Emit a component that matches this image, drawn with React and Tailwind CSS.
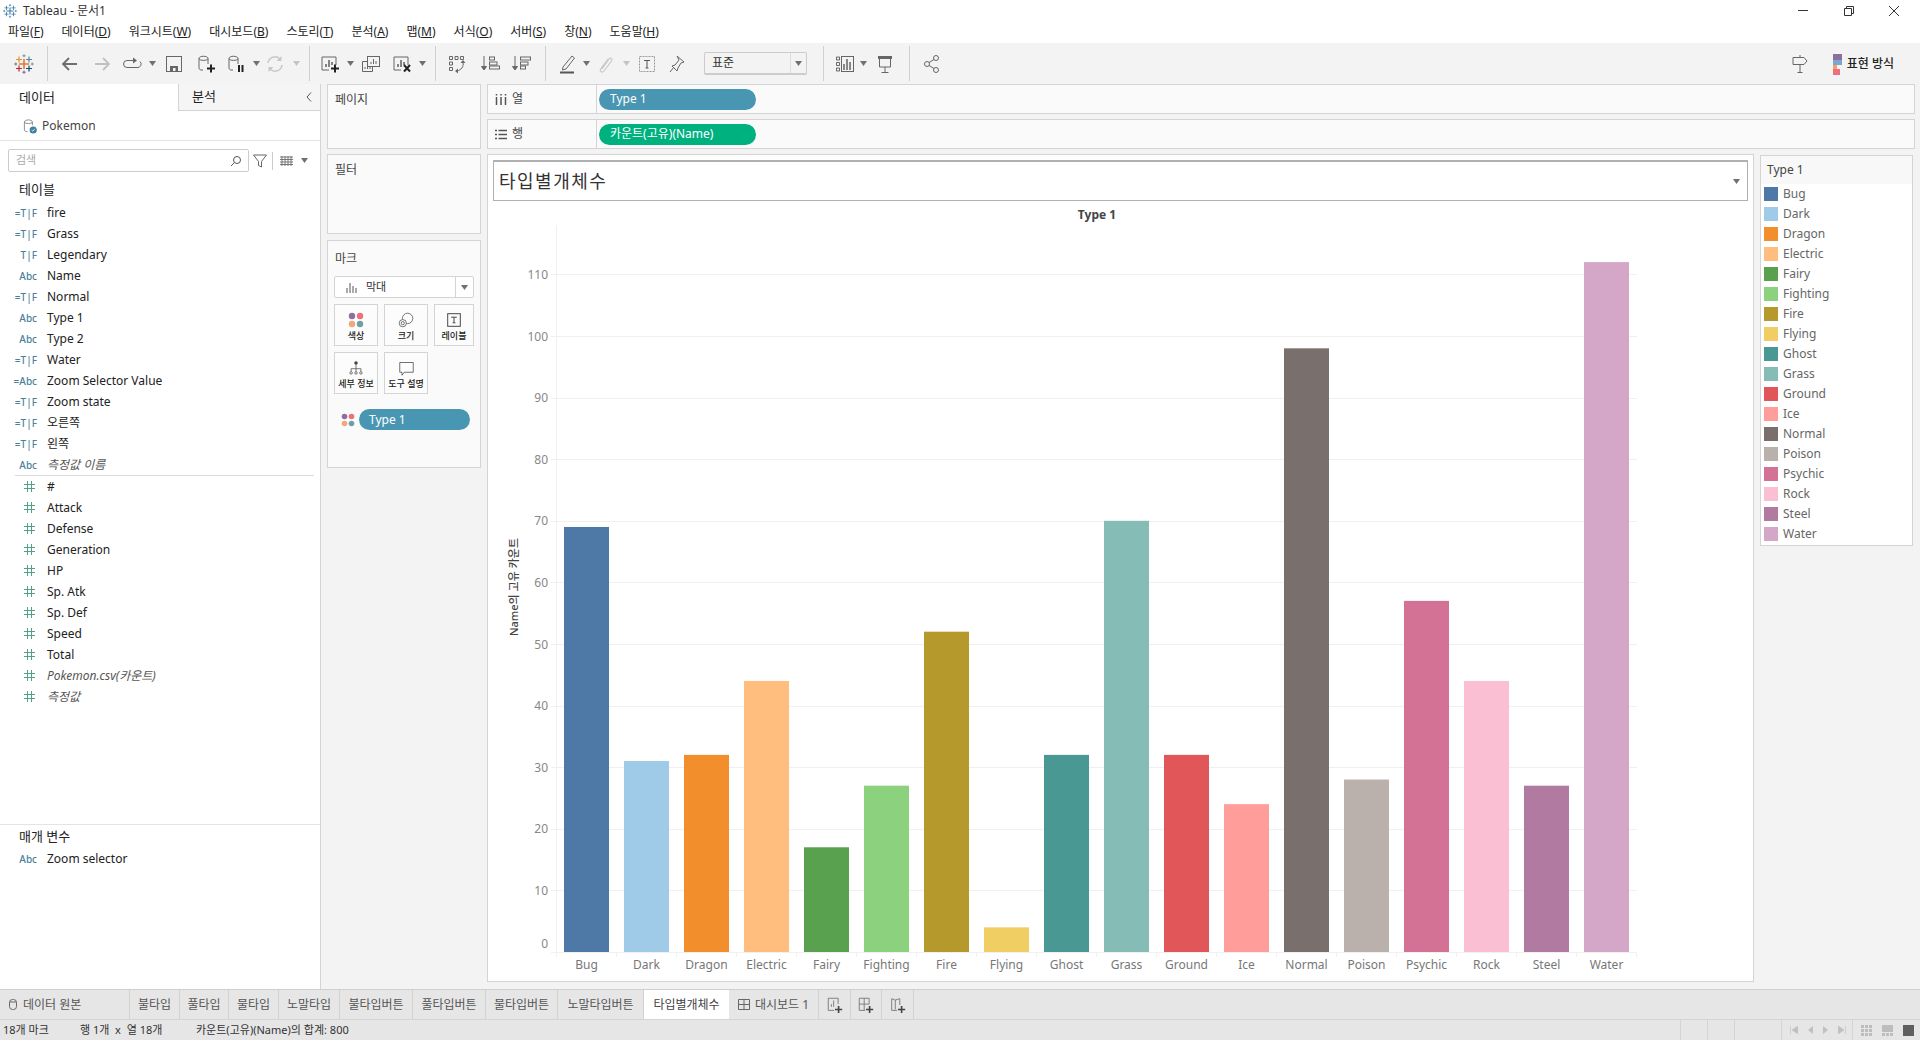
import React from 'react';

const dataFields = [
    ['=T|F', 'fire'], ['=T|F', 'Grass'], ['T|F', 'Legendary'], ['Abc', 'Name'], ['=T|F', 'Normal'],
    ['Abc', 'Type 1'], ['Abc', 'Type 2'], ['=T|F', 'Water'], ['=Abc', 'Zoom Selector Value'],
    ['=T|F', 'Zoom state'], ['=T|F', '오른쪽'], ['=T|F', '왼쪽'], ['Abc', '측정값 이름', true],
];
const measures = [
    ['#'], ['Attack'], ['Defense'], ['Generation'], ['HP'], ['Sp. Atk'], ['Sp. Def'], ['Speed'], ['Total'],
    ['Pokemon.csv(카운트)', true], ['측정값', true],
];
const types = [
    ['Bug', '#4e79a7', 69], ['Dark', '#a0cbe8', 31], ['Dragon', '#f28e2b', 32], ['Electric', '#ffbe7d', 44],
    ['Fairy', '#59a14f', 17], ['Fighting', '#8cd17d', 27], ['Fire', '#b6992d', 52], ['Flying', '#f1ce63', 4],
    ['Ghost', '#499894', 32], ['Grass', '#86bcb6', 70], ['Ground', '#e15759', 32], ['Ice', '#ff9d9a', 24],
    ['Normal', '#79706e', 98], ['Poison', '#bab0ac', 28], ['Psychic', '#d37295', 57], ['Rock', '#fabfd2', 44],
    ['Steel', '#b07aa1', 27], ['Water', '#d4a6c8', 112],
];
const menus = [
    ['파일', 'F'], ['데이터', 'D'], ['워크시트', 'W'], ['대시보드', 'B'], ['스토리', 'T'], ['분석', 'A'],
    ['맵', 'M'], ['서식', 'O'], ['서버', 'S'], ['창', 'N'], ['도움말', 'H'],
];
const sheetTabs = [
    ['불타입', 'w-[50px]'], ['풀타입', 'w-[49px]'], ['물타입', 'w-[50px]'], ['노말타입', 'w-[61px]'],
    ['불타입버튼', 'w-[73px]'], ['풀타입버튼', 'w-[73px]'], ['물타입버튼', 'w-[72px]'], ['노말타입버튼', 'w-[86px]'],
];

const Svg = ({ className = '', size = 20, children }) => (
    <svg width={size} height={size} viewBox="0 0 20 20" fill="none" className={`shrink-0 ${className}`}>{children}</svg>
);

const Cross = ({ x, y, r, c, w = 1 }) => (
    <path d={`M${x - r} ${y}H${x + r}M${x} ${y - r}V${y + r}`} stroke={c} strokeWidth={w} />
);

const Logo = ({ className, mono, size }) => (
    <Svg className={className} size={size}>
        <Cross x={10} y={10} r={5} c={mono ? '#3f7fa6' : '#e8762d'} w={1.6} />
        <Cross x={5} y={5.5} r={3} c={mono ? '#3f7fa6' : '#eb912b'} w={1.2} />
        <Cross x={15} y={5.5} r={3} c={mono ? '#3f7fa6' : '#5b879b'} w={1.2} />
        <Cross x={5} y={14.5} r={3} c={mono ? '#3f7fa6' : '#c72037'} w={1.2} />
        <Cross x={15} y={14.5} r={3} c={mono ? '#3f7fa6' : '#1f447e'} w={1.2} />
        <Cross x={10} y={1.8} r={1.6} c={mono ? '#3f7fa6' : '#7099a6'} />
        <Cross x={10} y={18.2} r={1.6} c={mono ? '#3f7fa6' : '#5b6591'} />
        <Cross x={1.8} y={10} r={1.6} c={mono ? '#3f7fa6' : '#59879b'} />
        <Cross x={18.2} y={10} r={1.6} c={mono ? '#3f7fa6' : '#7099a6'} />
    </Svg>
);

const Caret = ({ className = '', light }) => (
    <svg width="7" height="5" viewBox="0 0 7 5" className={`shrink-0 ${className}`}>
        <path d="M0 0h7L3.5 5z" fill={light ? '#c4c4c4' : '#707070'} />
    </svg>
);

const Divider = ({ className = '' }) => <div className={`w-px h-[35px] bg-[#d0d0d0] shrink-0 ${className}`} />;

const Cylinder = () => (
    <path d="M3 4.5C3 1.5 12 1.5 12 4.5V10M3 4.5C3 7 12 7 12 4.5M3 4.5V14c0 1 .8 1.8 2 2h2" stroke="#666" strokeWidth="1" />
);

const ChartBars = ({ stroke = '#666' }) => (
    <>
        <path d="M2 16V3h14v8M2 16h7" stroke={stroke} strokeWidth="1" />
        <path d="M6 13v-3M9 13V6M12 11V8" stroke={stroke} strokeWidth="1.6" />
    </>
);

const Plus = () => <path d="M15 10.5v8M11 14.5h8" stroke="#222" strokeWidth="2" />;

const Dots = ({ className = '', size = 16 }) => (
    <svg width={size} height={size} viewBox="0 0 16 16" className={`shrink-0 ${className}`}>
        <circle cx="4" cy="4" r="3.2" fill="#8f6f9f" />
        <circle cx="12" cy="4" r="3.2" fill="#f0707a" />
        <circle cx="4" cy="12" r="3.2" fill="#f2a77c" />
        <circle cx="12" cy="12" r="3.2" fill="#6f9fa8" />
    </svg>
);

const SortIcon = ({ flip }) => (
    <>
        <path d="M4 2v13M1.5 12.5L4 16l2.5-3.5z" stroke="#666" fill="#666" strokeWidth="1" />
        <rect x="9.5" y={flip ? 12 : 3} width="5" height="3" stroke="#666" />
        <rect x="9.5" y="8" width="7.5" height="3" stroke="#666" />
        <rect x="9.5" y={flip ? 3 : 12} width="10" height="3" stroke="#666" />
    </>
);

const Toolbar = () => (
    <div className="h-[41px] bg-[#f3f3f3] flex items-center pl-[14px] pr-[26px] shrink-0">
        <Logo />
        <Divider className="ml-[13px]" />
        <Svg className="ml-[12px]"><path d="M17 10H3M9 4l-6 6 6 6" stroke="#6e6e6e" strokeWidth="1.8" /></Svg>
        <Svg className="ml-[12px]"><path d="M3 10h14M11 4l6 6-6 6" stroke="#c0c0c0" strokeWidth="1.8" /></Svg>
        <Svg className="ml-[10px]">
            <path d="M11 6.5H5a3.5 3.5 0 0 0 0 7h10a3.5 3.5 0 0 0 3-6" stroke="#666" />
            <path d="M11 3.5l4 3-4 3z" fill="#666" />
        </Svg>
        <Caret className="ml-[7px]" />
        <Svg className="ml-[8px]">
            <rect x="2.5" y="2.5" width="15" height="15" stroke="#666" />
            <rect x="6" y="12" width="8" height="6" fill="#666" />
            <rect x="9" y="14" width="2.5" height="3" fill="#f3f3f3" />
        </Svg>
        <Svg className="ml-[12px]"><Cylinder /><Plus /></Svg>
        <Svg className="ml-[10px]">
            <Cylinder />
            <path d="M13 11v7M16.5 11v7" stroke="#222" strokeWidth="2" />
        </Svg>
        <Caret className="ml-[7px]" />
        <Svg className="ml-[5px]">
            <path d="M3 9a7 7 0 0 1 12-4M17 11a7 7 0 0 1-12 4" stroke="#c8c8c8" strokeWidth="1.5" />
            <path d="M16.5 2v5h-5zM3.5 18v-5h5z" fill="#c8c8c8" />
        </Svg>
        <Caret className="ml-[8px]" light />
        <Divider className="ml-[9px]" />
        <Svg className="ml-[10px]"><ChartBars /><Plus /></Svg>
        <Caret className="ml-[7px]" />
        <Svg className="ml-[7px]">
            <rect x="6.5" y="2.5" width="12" height="10" fill="#f3f3f3" stroke="#666" />
            <path d="M10 10V8M12.5 10V5M15 10V7" stroke="#666" />
            <path d="M6 7.5H1.5v10h10v-5" stroke="#666" />
            <path d="M4 15v-2M6.5 15v-2M9 15v-2" stroke="#666" />
        </Svg>
        <Svg className="ml-[11px]">
            <ChartBars />
            <path d="M12 11l6 6.5M18 11l-6 6.5" stroke="#222" strokeWidth="2" />
        </Svg>
        <Caret className="ml-[7px]" />
        <Divider className="ml-[9px]" />
        <Svg className="ml-[11px]">
            <path d="M2.5 2.5h3v3h-3zM8 2.5h3v3H8zM13.5 2.5h3v3h-3zM2.5 8h3v3h-3zM2.5 13.5h3v3h-3z" stroke="#666" />
            <path d="M16 8c1 5-2 8-6 9" stroke="#666" />
            <path d="M13.5 9L16 6l2.5 3zM11 14.5L8 17l3 2.5z" fill="#666" />
        </Svg>
        <Svg className="ml-[13px]"><SortIcon /></Svg>
        <Svg className="ml-[11px]"><SortIcon flip /></Svg>
        <Divider className="ml-[14px]" />
        <Svg className="ml-[12px]">
            <path d="M5 13L14 2l2.5 2L8 15l-3.5 1z" stroke="#666" />
            <path d="M2 18.5h14" stroke="#555" strokeWidth="2" />
        </Svg>
        <Caret className="ml-[5px]" />
        <Svg className="ml-[5px]">
            <path d="M7 15l7-10c1.500-2 4 0 2.500 2L9 17c-2 2.500-5 0-3-2.500L13 5" stroke="#c8c8c8" strokeWidth="1.2" />
        </Svg>
        <Caret className="ml-[8px]" light />
        <Svg className="ml-[7px]">
            <rect x="2.5" y="2.500" width="15" height="15" stroke="#999" strokeDasharray="2 1" />
            <path d="M7 6.500h6M10 6.500v7.500M8.500 14h3" stroke="#555" />
        </Svg>
        <Svg className="ml-[10px]">
            <path d="M10 2l7 6-3 1-3 5-1 3-5-5 3-1 4-5zM7 13l-4 5" stroke="#666" />
        </Svg>
        <div className="ml-[17px] w-[103px] h-[23px] border border-[#cccccc] border-b-2 rounded-[2px] flex items-center shrink-0">
            <span className="ml-[7px] text-[12px] text-[#333] flex-1">표준</span>
            <div className="w-[16px] h-full border-l border-[#dddddd] flex items-center justify-center"><Caret /></div>
        </div>
        <Divider className="ml-[16px]" />
        <Svg className="ml-[11px]">
            <path d="M1.500 3h3v3h-3zM1.500 8.500h3v3h-3zM1.500 14h3v3h-3z" stroke="#666" />
            <rect x="6.500" y="2.500" width="12" height="15" stroke="#666" />
            <path d="M9 16V10M12 16V5M15 16V8" stroke="#666" strokeWidth="1.500" />
        </Svg>
        <Caret className="ml-[5px]" />
        <Svg className="ml-[8px]">
            <path d="M3 2h14v3H3z" fill="#666" />
            <path d="M4.500 5v8h11V5M10 13v6M6.500 18.500h7" stroke="#666" />
        </Svg>
        <Divider className="ml-[14px]" />
        <Svg className="ml-[12px]">
            <circle cx="5" cy="10" r="2.500" stroke="#666" />
            <circle cx="14" cy="4" r="2.500" stroke="#666" />
            <circle cx="14" cy="16" r="2.500" stroke="#666" />
            <path d="M7 8.500l5-3M7 11.500l5 3" stroke="#666" />
        </Svg>
        <Svg className="ml-auto">
            <path d="M10 1v2M3 3.500h11l3 3.500-3 3.500H3zM10 10.500V18M7.500 18.500h5" stroke="#666" />
        </Svg>
        <svg width="9" height="22" viewBox="0 0 9 22" className="ml-[23px] shrink-0">
            <rect x="0" y="1" width="9" height="6" fill="#8b6f9e" />
            <rect x="0" y="7" width="13" height="5" fill="#7ba6d0" />
            <rect x="0" y="12" width="4" height="4" fill="#f2a25c" />
            <rect x="0" y="16" width="7" height="6" fill="#ef6f7e" />
        </svg>
        <span className="ml-[5px] text-[12px] font-medium text-[#222]">표현 방식</span>
    </div>
);

const Hash = () => (
    <svg width="11" height="11" viewBox="0 0 11 11" className="absolute left-[24px] top-[5px]">
        <path d="M3.500 0v11M7.500 0v11M0 3.500h11M0 7.500h11" stroke="#4fa283" strokeWidth="1" />
    </svg>
);

const FieldRow = ({ icon, name, italic }) => (
    <div className="relative h-[21px] flex items-center pl-[47px] shrink-0">
        {icon
            ? <span className="absolute right-[283px] text-[10px] text-[#4d7f99] font-medium leading-none">{icon}</span>
            : <Hash />}
        <span className={`text-[12px] ${italic ? 'italic text-[#555]' : 'text-[#222]'}`}>{name}</span>
    </div>
);

const DataPane = () => (
    <div className="w-[321px] shrink-0 bg-white border-r border-[#d4d4d4] flex flex-col">
        <div className="h-[27px] flex shrink-0">
            <div className="w-[178px] pl-[19px] pt-[1px] flex items-center text-[13px] text-[#222]">데이터</div>
            <div className="flex-1 bg-[#f5f5f5] border-l border-b border-[#d4d4d4] flex items-center justify-between pl-[13px] pr-[8px] text-[13px] text-[#222]">
                <span>분석</span>
                <svg width="6" height="10" viewBox="0 0 6 10"><path d="M5 .5L1 5l4 4.500" stroke="#555" fill="none" /></svg>
            </div>
        </div>
        <div className="h-[30px] border-b border-[#e4e4e4] flex items-center pl-[22px] shrink-0">
            <Svg size={16}>
                <path d="M3 5C3 1.500 13 1.500 13 5V9M3 5C3 7.500 13 7.500 13 5M3 5V15c0 1.500 2 2 4 2" stroke="#777" />
                <circle cx="14" cy="15" r="4.500" fill="#3f7fa6" />
                <path d="M12 15l1.500 1.500 2.500-3" stroke="#fff" />
            </Svg>
            <span className="ml-[4px] text-[12px] text-[#444]">Pokemon</span>
        </div>
        <div className="flex items-center pl-[8px] mt-[8px] shrink-0">
            <div className="w-[241px] h-[23px] border border-[#cccccc] rounded-[2px] flex items-center justify-between pl-[7px] pr-[6px]">
                <span className="text-[11px] text-[#aaa]">검색</span>
                <svg width="12" height="12" viewBox="0 0 12 12" fill="none"><circle cx="7" cy="5" r="3.500" stroke="#555" /><path d="M4.500 7.500L1 11" stroke="#555" /></svg>
            </div>
            <svg width="14" height="14" viewBox="0 0 14 14" fill="none" className="ml-[4px]"><path d="M.5 1h13L8.500 7.500V13l-3-1.500v-4z" stroke="#666" /></svg>
            <div className="w-px h-[18px] bg-[#cccccc] ml-[5px]" />
            <svg width="13" height="10" viewBox="0 0 13 10" className="ml-[7px]"><path d="M0 1h13M0 3.500h13M0 6h13M0 8.500h13M2 0v10M5 0v10M8 0v10M11 0v10" stroke="#777" strokeWidth="1" fill="none" /></svg>
            <Caret className="ml-[8px]" />
        </div>
        <div className="h-[22px] mt-[7px] pl-[19px] flex items-center text-[13px] text-[#222] shrink-0">테이블</div>
        <div className="flex flex-col shrink-0 mt-[1px]">
            {dataFields.map(([icon, name, italic]) => <FieldRow key={name} icon={icon} name={name} italic={italic} />)}
            <div className="h-px bg-[#dcdcdc] ml-[15px] mr-[6px]" />
            {measures.map(([name, italic]) => <FieldRow key={name} name={name} italic={italic} />)}
        </div>
        <div className="mt-auto h-[165px] border-t border-[#e4e4e4] shrink-0">
            <div className="h-[23px] pl-[19px] flex items-center text-[13px] text-[#222]">매개 변수</div>
            <FieldRow icon="Abc" name="Zoom selector" />
        </div>
    </div>
);

const MarkButton = ({ label, children }) => (
    <div className="h-[42px] border border-[#d4d4d4] bg-[#fcfcfc] flex flex-col items-center justify-start pt-[6px]">
        <div className="h-[18px] flex items-center">{children}</div>
        <span className="text-[9px] leading-[14px] font-medium text-[#222] whitespace-nowrap">{label}</span>
    </div>
);

const Card = ({ title, className }) => (
    <div className={`border border-[#d4d4d4] bg-[#fafafa] pl-[7px] pt-[6px] text-[12px] text-[#444] shrink-0 ${className}`}>{title}</div>
);

const MiddlePane = () => (
    <div className="w-[154px] ml-[6px] shrink-0 flex flex-col">
        <Card title="페이지" className="h-[65px]" />
        <Card title="필터" className="h-[80px] mt-[5px]" />
        <div className="h-[228px] mt-[6px] border border-[#d4d4d4] bg-[#fafafa] px-[6px] shrink-0">
            <div className="h-[35px] pl-[1px] flex items-center text-[12px] text-[#444]">마크</div>
            <div className="h-[22px] border border-[#d4d4d4] rounded-[2px] bg-white flex items-center">
                <svg width="11" height="11" viewBox="0 0 11 11" className="ml-[11px]"><path d="M1 11V6M4 11V1M7 11V4M10 11V6" stroke="#555" /></svg>
                <span className="ml-[9px] text-[11px] text-[#333] flex-1">막대</span>
                <div className="w-[18px] h-full border-l border-[#d4d4d4] flex items-center justify-center"><Caret /></div>
            </div>
            <div className="grid grid-cols-[44px_44px_40px] gap-[6px] mt-[6px]">
                <MarkButton label="색상"><Dots /></MarkButton>
                <MarkButton label="크기">
                    <Svg size={16}>
                        <circle cx="12" cy="8" r="6.500" stroke="#555" />
                        <circle cx="6" cy="14" r="4.500" fill="#fcfcfc" stroke="#555" />
                        <circle cx="6" cy="14" r="2" stroke="#555" />
                    </Svg>
                </MarkButton>
                <MarkButton label="레이블">
                    <Svg size={14}>
                        <rect x="1" y="1" width="18" height="18" stroke="#444" strokeWidth="1.400" />
                        <path d="M6 6h8M10 6v8M8 14h4" stroke="#444" strokeWidth="1.400" />
                    </Svg>
                </MarkButton>
                <MarkButton label="세부 정보">
                    <Svg size={14}>
                        <circle cx="10" cy="3" r="2.500" fill="#444" />
                        <path d="M10 5v6M3 15v-4h14v4M10 11v4" stroke="#444" />
                        <circle cx="3" cy="17" r="1.800" stroke="#444" />
                        <circle cx="10" cy="17" r="1.800" stroke="#444" />
                        <circle cx="17" cy="17" r="1.800" stroke="#444" />
                    </Svg>
                </MarkButton>
                <MarkButton label="도구 설명">
                    <Svg size={15}>
                        <path d="M1 2h18v13H7l-3 4v-4H1z" stroke="#444" />
                    </Svg>
                </MarkButton>
            </div>
            <div className="flex items-center mt-[15px] pl-[7px]">
                <Dots size={14} />
                <div className="ml-[4px] w-[111px] h-[21px] rounded-full bg-[#4996b2] text-white text-[12px] pl-[10px] flex items-center">Type 1</div>
            </div>
        </div>
    </div>
);

const Shelf = ({ label, pill, pillColor, icon, className = '' }) => (
    <div className={`h-[30px] border border-[#d4d4d4] bg-[#fafafa] flex items-center shrink-0 ${className}`}>
        <div className="w-[109px] h-full border-r border-[#d4d4d4] flex items-center pl-[7px]">
            {icon}
            <span className="ml-[5px] text-[12px] text-[#444]">{label}</span>
        </div>
        <div className={`ml-[2px] w-[157px] h-[21px] rounded-full text-white text-[12px] pl-[11px] flex items-center ${pillColor}`}>{pill}</div>
    </div>
);

const Chart = () => {
    const ticks = [0, 10, 20, 30, 40, 50, 60, 70, 80, 90, 100, 110];
    const yOf = (v) => 952 - v * 6.16;
    return (
        <svg width="1265" height="780" viewBox="488 201 1265 780" className="block" style={{ fontFamily: 'inherit' }}>
            <text x="1097" y="219" textAnchor="middle" fontSize="12" fontWeight="700" fill="#444">Type 1</text>
            <path d="M556.5 225V957" stroke="#f0f0f0" />
            {ticks.map((t) => (
                <g key={t}>
                    <path d={`M551 ${Math.round(yOf(t)) + 0.5}H1637`} stroke="#f0f0f0" />
                    <text x="548" y={t === 0 ? 948 : yOf(t) + 4.5} textAnchor="end" fontSize="12" fill="#888">{t}</text>
                </g>
            ))}
            {types.map(([name, color, value], i) => (
                <g key={name}>
                    <rect x={564 + i * 60} y={yOf(value)} width="45" height={value * 6.16} fill={color} />
                    <path d={`M${616.5 + i * 60} 952V957`} stroke="#f0f0f0" />
                    <text x={586.5 + i * 60} y="968.500" textAnchor="middle" fontSize="12" fill="#777">{name}</text>
                </g>
            ))}
            <text transform="translate(518 587) rotate(-90)" textAnchor="middle" fontSize="11" fontWeight="500" fill="#444">Name의 고유 카운트</text>
        </svg>
    );
};

const Legend = () => (
    <div className="w-[153px] h-[391px] ml-[6px] mt-[1px] border border-[#d4d4d4] bg-white shrink-0">
        <div className="h-[28px] bg-[#f8f8f8] flex items-center pl-[6px] text-[12px] text-[#444]">Type 1</div>
        {types.map(([name, color]) => (
            <div key={name} className="h-[20px] flex items-center pl-[3px]">
                <div className="w-[14px] h-[14px]" style={{ background: color }} />
                <span className="ml-[5px] text-[12px] text-[#666]">{name}</span>
            </div>
        ))}
    </div>
);

const Workspace = () => (
    <div className="ml-[6px] flex-1 pr-[5px] flex flex-col">
        <Shelf
            label="열"
            pill="Type 1"
            pillColor="bg-[#4996b2]"
            icon={<svg width="12" height="11" viewBox="0 0 12 11"><path d="M1.500 3v8M6 3v8M10.500 3v8M1.500 0v1.500M6 0v1.500M10.500 0v1.500" stroke="#555" strokeWidth="1.500" /></svg>}
        />
        <Shelf
            label="행"
            pill="카운트(고유)(Name)"
            pillColor="bg-[#00b180]"
            className="mt-[5px]"
            icon={<svg width="12" height="11" viewBox="0 0 12 11"><path d="M0 1.500h2M0 5.500h2M0 9.500h2M3.500 1.500H12M3.500 5.500H12M3.500 9.500H12" stroke="#555" strokeWidth="1.500" /></svg>}
        />
        <div className="flex mt-[5px] items-start">
            <div className="w-[1267px] h-[828px] border border-[#d4d4d4] bg-white shrink-0">
                <div className="h-[41px] mx-[5px] mt-[5px] border border-[#b0b0b0] border-t-2 flex items-center justify-between pl-[5px] pr-[7px]">
                    <span className="text-[18px] tracking-[1.500px] text-[#333]">타입별개체수</span>
                    <Caret />
                </div>
                <Chart />
            </div>
            <Legend />
        </div>
    </div>
);

const TabBar = () => (
    <div className="h-[30px] bg-[#e6e6e6] border-t border-[#cfcfcf] flex shrink-0 text-[12px] text-[#555]">
        <div className="w-[130px] border-r border-[#d2d2d2] flex items-center pl-[9px]">
            <svg width="8" height="11" viewBox="0 0 8 11" fill="none"><rect x=".5" y=".5" width="7" height="10" rx="3" stroke="#666" /><path d="M.5 3h7" stroke="#666" /></svg>
            <span className="ml-[6px]">데이터 원본</span>
        </div>
        {sheetTabs.map(([name, w]) => (
            <div key={name} className={`${w} border-r border-[#d2d2d2] flex items-center justify-center whitespace-nowrap`}>{name}</div>
        ))}
        <div className="w-[85px] bg-white flex items-center justify-center whitespace-nowrap text-[#444]">타입별개체수</div>
        <div className="w-[90px] border-r border-[#d2d2d2] flex items-center justify-center whitespace-nowrap">
            <svg width="12" height="11" viewBox="0 0 12 11" fill="none"><path d="M.5.5h11v10H.5zM6 .5v10M.5 5.500h11" stroke="#666" /></svg>
            <span className="ml-[5px]">대시보드 1</span>
        </div>
        <div className="w-[32px] border-r border-[#d2d2d2] flex items-center justify-center">
            <Svg size={18}>
                <path d="M2.500 16V2.500h11V9M2.500 16H9" stroke="#777" />
                <path d="M6 12V9M8.500 12V5" stroke="#777" />
                <path d="M14 11v8M10 15h8" stroke="#444" strokeWidth="1.800" />
            </Svg>
        </div>
        <div className="w-[31px] border-r border-[#d2d2d2] flex items-center justify-center">
            <Svg size={18}>
                <path d="M2.500 16V2.500h11V9M2.500 16H9M2.500 9h11M8 2.500V16" stroke="#777" />
                <path d="M14 11v8M10 15h8" stroke="#444" strokeWidth="1.800" />
            </Svg>
        </div>
        <div className="w-[32px] border-r border-[#d2d2d2] flex items-center justify-center">
            <Svg size={18}>
                <path d="M3 16V3l4 1.500 5-1.500v7M3 16h6M7 4.500V15" stroke="#777" />
                <path d="M14 11v8M10 15h8" stroke="#444" strokeWidth="1.800" />
            </Svg>
        </div>
    </div>
);

const StatusBar = () => (
    <div className="h-[21px] bg-[#e6e6e6] border-t border-[#d4d4d4] flex items-center shrink-0 text-[11px] text-[#333]">
        <span className="ml-[3px] w-[77px]">18개 마크</span>
        <span className="w-[116px]">행 1개 &nbsp;x&nbsp; 열 18개</span>
        <span>카운트(고유)(Name)의 합계: 800</span>
        <div className="ml-auto h-full w-[27px] border-l border-[#d4d4d4]" />
        <div className="h-full w-[27px] border-l border-[#d4d4d4]" />
        <div className="h-full w-[47px] border-l border-[#d4d4d4]" />
        <div className="h-full w-[71px] border-l border-[#d4d4d4] flex items-center pl-[8px] gap-[8px]">
            <svg width="8" height="8" viewBox="0 0 8 8"><path d="M.5 0v8M8 0L2 4l6 4z" fill="#c0c0c0" stroke="#c0c0c0" strokeWidth=".6" /></svg>
            <svg width="8" height="8" viewBox="0 0 8 8"><path d="M7 0L2 4l5 4z" fill="#c0c0c0" /></svg>
            <svg width="8" height="8" viewBox="0 0 8 8"><path d="M1 0l5 4-5 4z" fill="#c0c0c0" /></svg>
            <svg width="8" height="8" viewBox="0 0 8 8"><path d="M7.500 0v8M0 0l6 4-6 4z" fill="#c0c0c0" stroke="#c0c0c0" strokeWidth=".6" /></svg>
        </div>
        <div className="h-full border-l border-[#d4d4d4] flex items-center pl-[8px] pr-[6px] gap-[10px]">
            <svg width="11" height="11" viewBox="0 0 11 11"><path d="M0 0h3v3H0zM4 0h3v3H4zM8 0h3v3H8zM0 4h3v3H0zM4 4h3v3H4zM8 4h3v3H8zM0 8h3v3H0zM4 8h3v3H4zM8 8h3v3H8z" fill="#bdbdbd" /></svg>
            <svg width="11" height="11" viewBox="0 0 11 11"><path d="M0 0h11v7H0zM0 8h3v3H0zM4 8h3v3H4zM8 8h3v3H8z" fill="#bdbdbd" /></svg>
            <div className="w-[11px] h-[11px] bg-[#5f5f5f]" />
        </div>
    </div>
);

export default function App() {
    return (
        <div className="w-[1920px] h-[1040px] overflow-hidden flex flex-col bg-white font-['Noto_Sans','Noto_Sans_CJK_KR',sans-serif]">
            {/* Title bar */}
            <div className="h-[21px] flex items-center shrink-0 pl-[3px]">
                <Logo mono size={14} />
                <span className="ml-[6px] text-[12px] text-[#333]">Tableau - 문서1</span>
                <svg width="10" height="1" viewBox="0 0 10 1" className="ml-auto"><path d="M0 .5h10" stroke="#333" /></svg>
                <svg width="10" height="10" viewBox="0 0 10 10" fill="none" className="ml-[36px]"><path d="M.5 2.500h7v7h-7zM2.500 2.500v-2h7v7h-2" stroke="#333" /></svg>
                <svg width="10" height="10" viewBox="0 0 10 10" fill="none" className="ml-[35px] mr-[21px]"><path d="M0 0l10 10M10 0L0 10" stroke="#333" /></svg>
            </div>
            {/* Menu */}
            <div className="h-[22px] flex items-center gap-[18px] pl-[8px] text-[12px] text-[#222] shrink-0">
                {menus.map(([name, key]) => (
                    <span key={key} className="whitespace-nowrap">{name}(<span className="underline">{key}</span>)</span>
                ))}
            </div>
            <Toolbar />
            <div className="flex-1 flex bg-[#f3f3f3] min-h-0">
                <DataPane />
                <MiddlePane />
                <Workspace />
            </div>
            <TabBar />
            <StatusBar />
        </div>
    );
}
